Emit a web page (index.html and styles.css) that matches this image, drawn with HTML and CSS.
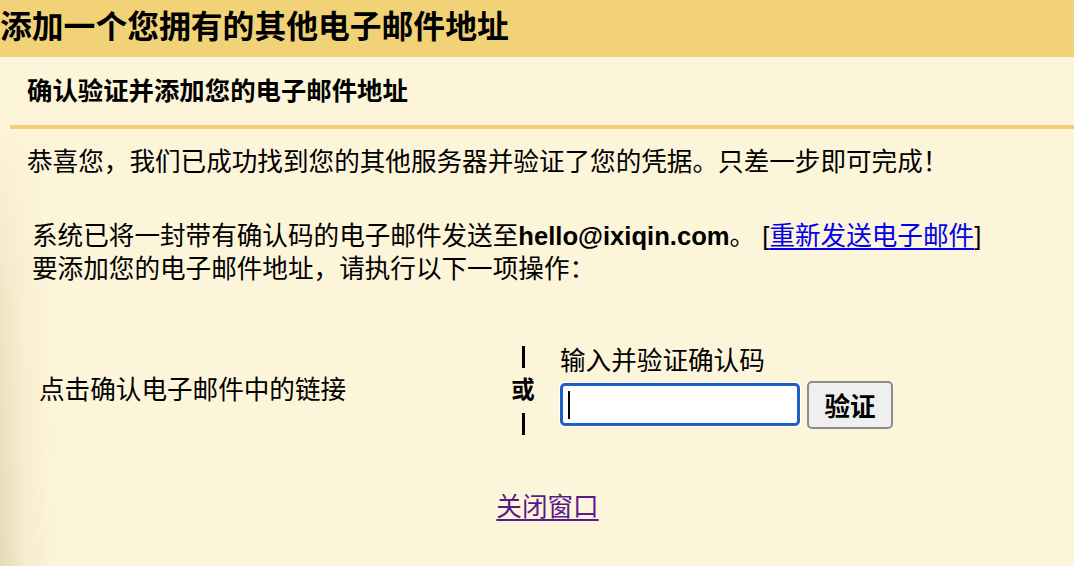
FILE: index.html
```html
<!DOCTYPE html>
<html lang="zh-CN">
<head>
<meta charset="utf-8">
<title>添加一个您拥有的其他电子邮件地址</title>
<link rel="stylesheet" href="styles.css">
</head>
<body>
<div class="shade"></div>
<header class="topbar"><h1 class="title">添加一个您拥有的其他电子邮件地址</h1></header>
<div class="subhead"><h2 class="subtitle">确认验证并添加您的电子邮件地址</h2></div>
<main class="content">
  <p class="congrats">恭喜您，我们已成功找到您的其他服务器并验证了您的凭据。只差一步即可完成！</p>
  <div class="instructions">
    <p class="line">系统已将一封带有确认码的电子邮件发送至<b class="email">hello@ixiqin.com</b>。 [<a class="resend" href="#">重新发送电子邮件</a>]</p>
    <p class="line">要添加您的电子邮件地址，请执行以下一项操作：</p>
  </div>
  <div class="choice">
    <div class="choice-left">点击确认电子邮件中的链接</div>
    <div class="or">
      <span class="bar"></span>
      <span class="or-text">或</span>
      <span class="bar"></span>
    </div>
    <div class="choice-right">
      <div class="label">输入并验证确认码</div>
      <div class="code-row">
        <div class="input-wrap"><input class="code-input" type="text" aria-label="确认码"><span class="caret"></span></div>
        <button class="verify" type="button">验证</button>
      </div>
    </div>
  </div>
  <div class="close"><a class="close-link" href="#">关闭窗口</a></div>
</main>
</body>
</html>
```
FILE: styles.css
```css
html, body {
  margin: 0;
  padding: 0;
}
body {
  background: #fdf5da;
  color: #000;
  font-family: "Liberation Sans", "Noto Sans CJK SC", sans-serif;
  font-size: 25.6px;
  position: relative;
  min-height: 566px;
  overflow: hidden;
}
.shade {
  position: absolute;
  left: 0;
  top: 57px;
  bottom: 0;
  width: 60px;
  background: linear-gradient(to right, rgba(190, 170, 120, 0.35), rgba(190, 170, 120, 0.12) 25px, rgba(190, 170, 120, 0) 55px);
  -webkit-mask-image: linear-gradient(to bottom, rgba(0,0,0,0) 60px, rgba(0,0,0,0.6) 250px, #000 500px);
  mask-image: linear-gradient(to bottom, rgba(0,0,0,0) 60px, rgba(0,0,0,0.6) 250px, #000 500px);
  pointer-events: none;
}
.topbar {
  background: #f2d276;
  height: 57px;
  display: flex;
  align-items: center;
}
.title {
  margin: 0;
  font-size: 31.8px;
  font-weight: bold;
  line-height: 57px;
  padding-left: 0;
  position: relative;
  top: -1px;
}
.subhead {
  height: 68px;
  display: flex;
  align-items: center;
  margin-left: 10px;
  border-bottom: 4px solid #f2d276;
}
.subtitle {
  margin: 0;
  padding-left: 17px;
  font-size: 25.4px;
  font-weight: bold;
  line-height: 33px;
}
.content {
  padding-left: 21px;
}
.congrats {
  margin: 17px 0 0 6px;
  line-height: 33px;
}
.instructions {
  margin: 41px 0 0 11px;
}
.line {
  margin: 0;
  line-height: 33px;
}
.email {
  font-weight: bold;
}
.resend {
  color: #0000ee;
  text-decoration: underline;
  text-underline-offset: 3px;
}
.choice {
  display: flex;
  align-items: center;
  margin-top: 60px;
}
.choice-left {
  width: 482px;
  box-sizing: border-box;
  padding-left: 18px;
  line-height: 33px;
}
.or {
  width: 40px;
  display: flex;
  flex-direction: column;
  align-items: center;
}
.bar {
  display: block;
  width: 3px;
  height: 22px;
  background: #000;
}
.or-text {
  font-weight: bold;
  font-size: 23.5px;
  line-height: 45px;
}
.choice-right {
  margin-left: 17px;
  display: flex;
  flex-direction: column;
}
.label {
  line-height: 33px;
  margin-top: -8px;
}
.code-row {
  display: flex;
  align-items: center;
  gap: 7px;
  margin-top: 3px;
}
.input-wrap {
  position: relative;
  width: 240px;
  height: 43px;
}
.code-input {
  display: block;
  box-sizing: border-box;
  width: 240px;
  height: 43px;
  margin: 0;
  padding: 0 8px;
  border: 3px solid #1f5fc6;
  border-radius: 5px;
  background: #fff;
  box-shadow: 0 0 0 1px #fff;
  outline: none;
  font-size: 25px;
}
.caret {
  position: absolute;
  left: 8px;
  top: 8px;
  width: 2px;
  height: 28px;
  background: #000;
}
.verify {
  box-sizing: border-box;
  width: 86px;
  height: 48px;
  margin: 0;
  padding: 0;
  border: 2px solid #8b8b8b;
  border-radius: 5px;
  background: #efefef;
  color: #000;
  font-family: "Liberation Sans", "Noto Sans CJK SC", sans-serif;
  font-size: 25.6px;
  font-weight: bold;
}
.close {
  text-align: center;
  margin-top: 56px;
  line-height: 33px;
}
.close-link {
  color: #551a8b;
  text-decoration: underline;
  text-underline-offset: 3px;
}
```
